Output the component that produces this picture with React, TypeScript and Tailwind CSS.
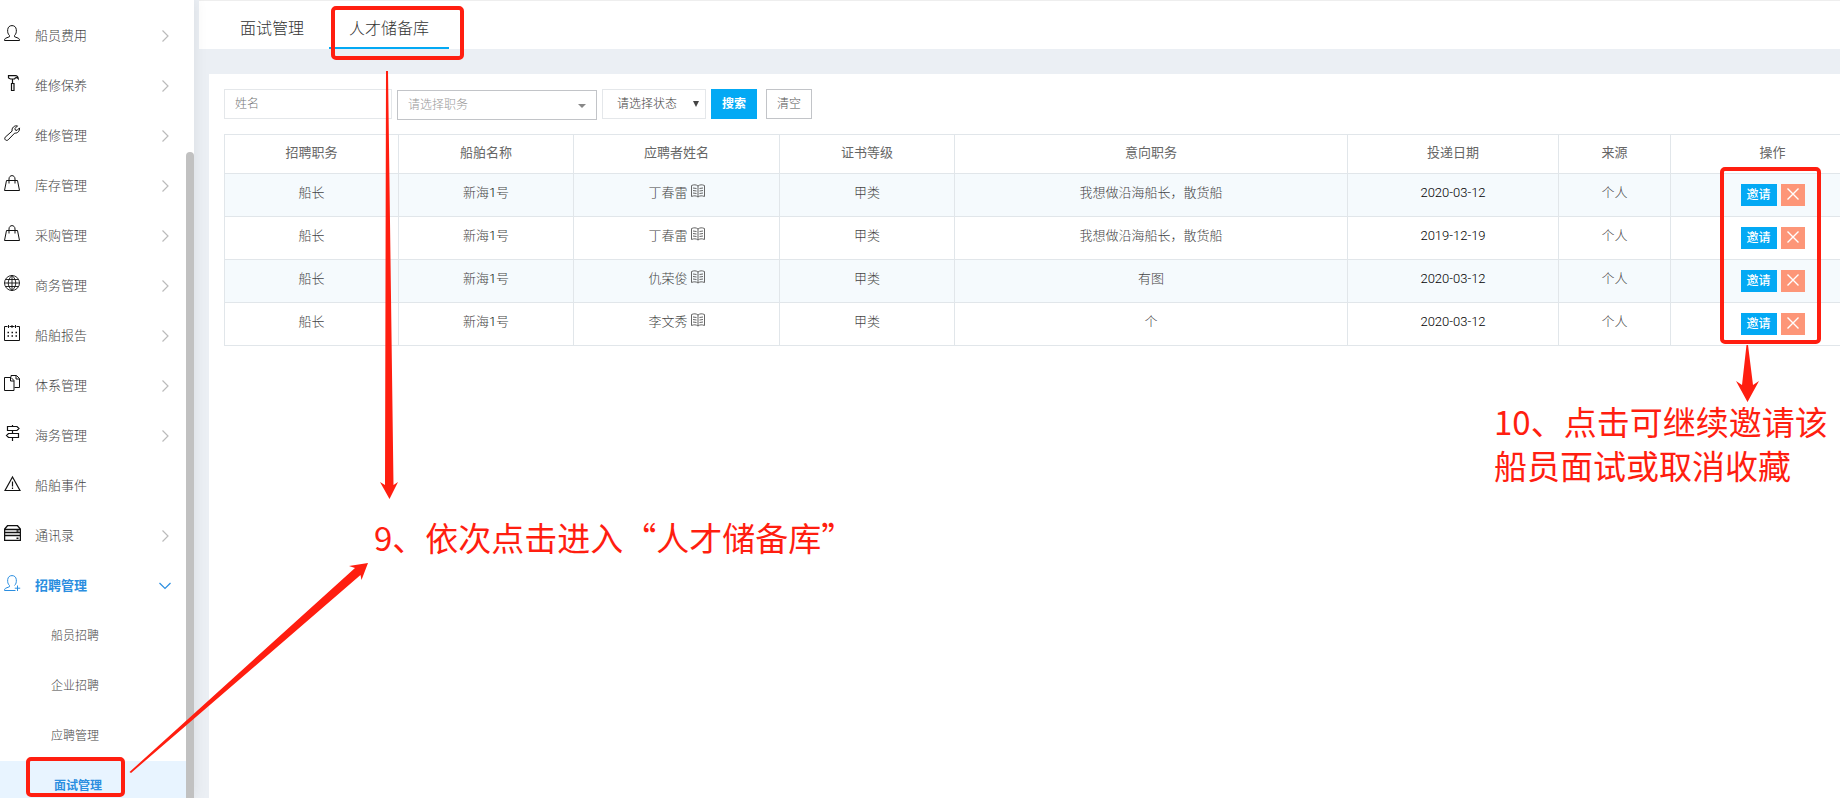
import { ReactNode } from "react";
import clsx from "clsx";

type MenuItem = { label: string; icon: ReactNode; expandable?: boolean; active?: boolean };

const bag = <path d="M2.500 5.500h11l2 10H.5zM5 8.500V4c0-4.500 6-4.500 6 0v4.500" />;

const menu: MenuItem[] = [
  {
    label: "船员费用",
    expandable: true,
    icon: <path d="M5.500 10.500C3.800 9 3.500 7 3.700 4.600 4 2 5.600.6 8 .6s4 1.400 4.300 4c.2 2.400-.1 4.400-1.800 5.900v1.200l4 1.600c.8.4 1 1.200 1 2.200H.5c0-1 .2-1.800 1-2.200l4-1.600z" />,
  },
  {
    label: "维修保养",
    expandable: true,
    icon: <path strokeWidth="1.200" d="M4.500.6h7c1.500 0 2.500 1 2.700 3-.8-.9-1.700-1.100-2.700-.8L10.500 4h-4l-2-1zM8.500 4v4.500M7.500 8.500h2.500v7H7.500z" />,
  },
  {
    label: "维修管理",
    expandable: true,
    icon: <path d="M13.500.9 11 3.400l.3 1.700 1.700.3 2.500-2.500c.3 3-1.700 5.600-4.800 5.200L4.200 14.800c-1.700 1.700-4.600-.5-3-2.600l6.900-6.100C7.400 3 10.400.1 13.500.9z" />,
  },
  { label: "库存管理", expandable: true, icon: bag },
  { label: "采购管理", expandable: true, icon: bag },
  {
    label: "商务管理",
    expandable: true,
    icon: <path strokeWidth="0.900" d="M8 .5a7.500 7.500 0 1 0 0 15 7.500 7.500 0 0 0 0-15zM8 .5v15M.5 8h15M2 4.500h12M2 11.500h12M8 .5c-5 4.500-5 10.500 0 15M8 .5c5 4.500 5 10.500 0 15" />,
  },
  {
    label: "船舶报告",
    expandable: true,
    icon: (
      <>
        <path d="M3.500 1.500h-3v14h15v-14h-3M5.500 1.500h5M4.500 0v3M8 0v3M11.500 0v3" />
        <path strokeWidth="1.500" strokeDasharray="1.500 2.500" d="M3.500 7.500h9.500M3.500 11h9.500" />
      </>
    ),
  },
  {
    label: "体系管理",
    expandable: true,
    icon: <path d="M.5 2.500h6.500l3 3v10H.500zM6.500 2.500v3.500H10M7 2V.5h5.500l3 3v9H10.500M12 .5V4h3.500" />,
  },
  {
    label: "海务管理",
    expandable: true,
    icon: <path strokeWidth="1.200" d="M3.500 1.500h9.500l2 2-2 2H3.500zM14.500 8.500H4.500l-2 2 2 2h10zM8.500 0v1.500M8.500 5.500v3M8.500 12.500V16" />,
  },
  {
    label: "船舶事件",
    icon: <path strokeWidth="1.200" d="M8.500 2 16 15.500H1zM8.500 6.500v5M8.500 12.500v1.500" />,
  },
  {
    label: "通讯录",
    expandable: true,
    icon: (
      <>
        <path strokeWidth="1.300" d="M3.500.7h10L16.400 4v3.500H.600V4zM.6 4.500h15.800M.6 7.500v8h15.800v-8M.6 10.500h15.800" />
        <path strokeWidth="1.500" d="M12.500 6h2M12.500 13.200h2" />
      </>
    ),
  },
  {
    label: "招聘管理",
    expandable: true,
    active: true,
    icon: <path d="M5.500 10.500C3.800 9 3.500 7 3.700 4.600 4 2 5.600.6 8 .6s4 1.400 4.300 4c.2 2.400-.1 4.400-1.800 5.900M5.500 10.500v1.200l-4 1.600c-.8.4-1 1.200-1 2.200h11M13.500 10.500v5.500M10.800 13.200h5.400" />,
  },
];

const subMenu = ["船员招聘", "企业招聘", "应聘管理", "面试管理"];

const columns = [
  { title: "招聘职务", width: "w-[174px]" },
  { title: "船舶名称", width: "w-[175px]" },
  { title: "应聘者姓名", width: "w-[206px]" },
  { title: "证书等级", width: "w-[175px]" },
  { title: "意向职务", width: "w-[393px]" },
  { title: "投递日期", width: "w-[211px]" },
  { title: "来源", width: "w-[112px]" },
  { title: "操作", width: "w-[204px]" },
];

const rows = [
  { name: "丁春雷", intent: "我想做沿海船长，散货船", date: "2020-03-12" },
  { name: "丁春雷", intent: "我想做沿海船长，散货船", date: "2019-12-19" },
  { name: "仇荣俊", intent: "有图", date: "2020-03-12" },
  { name: "李文秀", intent: "个", date: "2020-03-12" },
];

function Sidebar() {
  return (
    <aside className="relative z-10 flex w-[194px] shrink-0 bg-white shadow-[0_0_14px_rgba(0,0,0,0.08)]">
      <nav className="flex-1 pt-[11px]">
        {menu.map((item) => (
          <a
            key={item.label}
            href="#"
            className={clsx(
              "flex h-[50px] items-center pl-1 pr-[15px] text-[13px]",
              item.active ? "font-bold text-[#2b8ee0]" : "font-light text-[#444]"
            )}
          >
            <svg
              viewBox="0 0 17 16"
              className={clsx("mb-[6px] mr-[14px] h-4 w-[17px]", item.active ? "text-[#2b8ee0]" : "text-[#111]")}
              fill="none"
              stroke="currentColor"
              strokeWidth="1"
            >
              {item.icon}
            </svg>
            <span className="flex-1">{item.label}</span>
            {item.expandable && (
              <svg viewBox="0 0 12 12" className="h-3 w-3" fill="none" stroke={item.active ? "#2b8ee0" : "#bbb"} strokeWidth="1.200">
                <path d={item.active ? "M.5 3 6 8.500 11.500 3" : "M3.500 .5 9 6 3.500 11.500"} />
              </svg>
            )}
          </a>
        ))}
        {subMenu.map((label) => (
          <a
            key={label}
            href="#"
            className={clsx(
              "flex h-[50px] items-center text-xs",
              label === "面试管理"
                ? "bg-[#e8f4ff] pl-[54px] font-bold text-[#2b8ee0]"
                : "pl-[51px] font-light text-[#444]"
            )}
          >
            {label}
          </a>
        ))}
      </nav>
      <div className="flex w-2 pt-[152px]">
        <div className="flex-1 rounded-t bg-[#c1c1c1]" />
      </div>
    </aside>
  );
}

function Filters() {
  return (
    <form className="flex items-start text-xs font-light text-[#555]" onSubmit={(e) => e.preventDefault()}>
      <input
        aria-label="姓名"
        placeholder="姓名"
        className="h-[30px] w-[168px] border border-[#e4e7ea] px-[10px] placeholder:text-[#777]"
      />
      <div className="relative ml-[5px] mt-px">
        <select
          aria-label="请选择职务"
          className="h-[30px] w-[200px] appearance-none border border-[#c2c4c8] bg-white px-[10px] text-[#999]"
        >
          <option>请选择职务</option>
        </select>
        <svg viewBox="0 0 8 4" className="pointer-events-none absolute right-[11px] top-[14px] h-1 w-2" fill="#888">
          <path d="M0 0h8L4 4z" />
        </svg>
      </div>
      <div className="relative ml-[5px]">
        <select
          aria-label="请选择状态"
          className="h-[30px] w-[104px] appearance-none border border-[#e4e7ea] bg-white pl-[14px] text-[#444]"
        >
          <option>请选择状态</option>
        </select>
        <svg viewBox="0 0 6 6" className="pointer-events-none absolute right-[7px] top-3 h-[6px] w-[6px]" fill="#444">
          <path d="M0 0h6L3 6z" />
        </svg>
      </div>
      <button type="submit" className="ml-[5px] h-[30px] w-[46px] bg-[#03a9f4] font-bold text-white">
        搜索
      </button>
      <button type="reset" className="ml-[9px] h-[30px] w-[46px] border border-[#c2c4c8] bg-white">
        清空
      </button>
    </form>
  );
}

function CandidateTable() {
  return (
    <table className="mt-[14px] w-[1651px] table-fixed border-collapse text-center text-[13px] font-light leading-[18px] text-[#444] [&_td]:border [&_td]:border-[#e1e6ea] [&_th]:border [&_th]:border-[#e1e6ea]">
      <thead>
        <tr className="h-[39px] text-[#666]">
          {columns.map((col) => (
            <th key={col.title} className={clsx("pb-[2px] font-normal", col.width)}>
              {col.title}
            </th>
          ))}
        </tr>
      </thead>
      <tbody>
        {rows.map((row, i) => (
          <tr key={i} className="h-[43px] align-top odd:bg-[#f5fafd] [&>td]:pt-[10px]">
            <td>船长</td>
            <td>
              新海<span className="text-black">1</span>号
            </td>
            <td>
              <span className="inline-flex items-start gap-[3px]">
                {row.name}
                <svg viewBox="0 0 14 14" className="h-[14px] w-[14px]" fill="none" stroke="#666">
                  <path d="M.5 1.500C3 .5 5 .5 7 2c2-1.500 4-1.500 6.500-.5v11C11 11.500 9 11.500 7 13c-2-1.500-4-1.500-6.500-.5zM7 2v11M2 4l3.500.5M2 6.500l3.500.5M2 9l3.500.5M12 4l-3.500.5M12 6.500 8.500 7M12 9l-3.500.5" />
                </svg>
              </span>
            </td>
            <td>甲类</td>
            <td>{row.intent}</td>
            <td className="text-black">{row.date}</td>
            <td>个人</td>
            <td>
              <div className="flex justify-center gap-1">
                <button className="h-[22px] w-9 bg-[#03a9f4] text-xs font-medium text-white">邀请</button>
                <button aria-label="取消收藏" className="flex h-[22px] w-6 justify-center bg-[#fd9678] pt-1">
                  <svg viewBox="0 0 12 12" className="h-3 w-3" stroke="#fff" strokeWidth="1.400">
                    <path d="M.5.5l11 11M11.500.5l-11 11" />
                  </svg>
                </button>
              </div>
            </td>
          </tr>
        ))}
      </tbody>
    </table>
  );
}

// Red guide marks that float over the page
function Annotations() {
  return (
    <div className="pointer-events-none absolute inset-0 z-20 font-['Noto_Sans_CJK_SC',sans-serif] text-[33px] leading-[44px] text-[#ff1e10]">
      <div className="absolute left-[331px] top-[6px] h-[54px] w-[133px] rounded-[5px] border-4 border-[#ff1e10]" />
      <div className="absolute left-[26px] top-[757px] h-10 w-[99px] rounded-[5px] border-4 border-[#ff1e10]" />
      <div className="absolute left-[1720px] top-[167px] h-[177px] w-[101px] rounded-[5px] border-4 border-[#ff1e10]" />
      <svg viewBox="0 0 1840 798" className="absolute left-0 top-0 h-[798px] w-[1840px]" fill="#ff1e10">
        <path d="M386 71h2l5.500 414 4.500-3-8.500 17-9.500-17 5 3z" />
        <path d="M129.500 772 355 568l-6-2 19-3-6.500 17-1-5L131 773z" />
        <path d="M1746.500 345h1.500l5 40 6-4-11.500 21-11.500-21 6 4z" />
      </svg>
      <p className="absolute left-[374px] top-[515px] whitespace-nowrap">9、依次点击进入“人才储备库”</p>
      <p className="absolute left-[1494px] top-[399px] whitespace-nowrap">
        10、点击可继续邀请该
        <br />
        船员面试或取消收藏
      </p>
    </div>
  );
}

export default function App() {
  return (
    <div className="relative flex h-screen overflow-hidden bg-[#ebeff4] font-[Roboto,'Noto_Sans_CJK_SC',sans-serif]">
      <Sidebar />
      <main className="flex min-w-0 flex-1 flex-col overflow-hidden pl-[5px]">
        <div className="flex h-[49px] shrink-0 gap-[5px] border-t border-[#eee] bg-white pl-[21px] text-base font-light text-[#333]">
          <button className="px-5 pt-2">面试管理</button>
          <button className="border-b-2 border-[#03a9f4] px-5 pt-[10px]">人才储备库</button>
        </div>
        <section className="ml-[10px] mt-[25px] flex-1 overflow-hidden bg-white pl-[15px] pt-[15px]">
          <Filters />
          <CandidateTable />
        </section>
      </main>
      <Annotations />
    </div>
  );
}
